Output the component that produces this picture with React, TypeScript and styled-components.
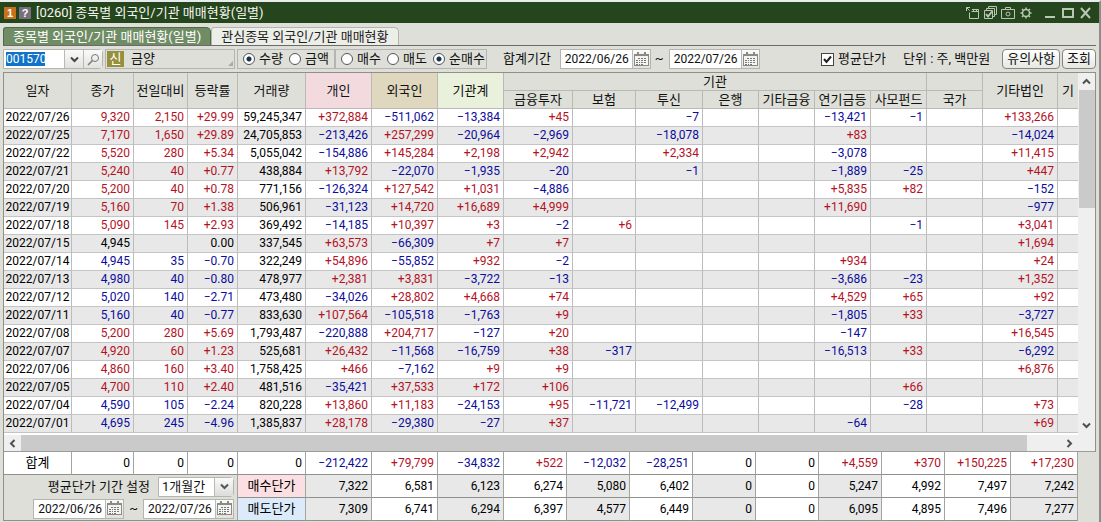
import React from "react";
import styled, { createGlobalStyle } from "styled-components";

const Global = createGlobalStyle`
  * { box-sizing: border-box; }
  body { margin: 0; background: #dedfd9; color: #111; font: 13px/16px Roboto, "Noto Sans CJK KR", sans-serif; }
  input, select, button { font: inherit; color: inherit; }
`;

const RED = "#b4121f";
const BLUE = "#0c0c9c";

const Window = styled.div`
  display: flex;
  flex-direction: column;
  min-height: 100vh;
  border-top: 2px solid #e9ecef;
  border-right: 2px solid #8c8c88;
`;
const TitleBar = styled.header`
  display: flex;
  align-items: center;
  gap: 3px;
  height: 21px;
  padding: 0 6px 0 4px;
  background: #25451c;
  color: #f4f6f2;
  svg { flex: none; }
`;
const TitleTag = styled.span<{ $bg: string }>`
  display: grid;
  place-items: center;
  width: 12px;
  height: 12px;
  background: ${(p) => p.$bg};
  color: #fff;
  font: bold 11px/12px "Liberation Sans", sans-serif;
`;
const Title = styled.h1`
  flex: 1;
  margin: 0 0 0 2px;
  font-size: 13px;
  font-weight: 400;
  line-height: 16px;
  white-space: nowrap;
`;
const IconButton = styled.button<{ $gap?: number }>`
  display: flex;
  margin: 0 0 0 ${(p) => p.$gap ?? 0}px;
  padding: 0;
  border: 0;
  background: none;
  color: #b9c7b4;
`;
const Tabs = styled.nav`
  display: flex;
  align-items: flex-end;
  height: 23px;
  margin: 0 3px;
  border-bottom: 1px solid #6b6b67;
`;
const Tab = styled.button<{ $active?: boolean }>`
  height: 18px;
  padding: 0 9px;
  border: 1px solid ${(p) => (p.$active ? "#4d6a44" : "#b3b4ae")};
  border-bottom: 0;
  border-radius: 3px 5px 0 0;
  background: ${(p) => (p.$active ? "#6f8c65" : "#eceee8")};
  color: ${(p) => (p.$active ? "#fff" : "#222")};
  line-height: 16px;
  white-space: nowrap;
`;
const Toolbar = styled.div`
  display: flex;
  align-items: center;
  height: 26px;
  padding: 0 3px;
  white-space: nowrap;
`;
const Box = styled.div<{ $w?: number; $ml?: number }>`
  display: flex;
  align-items: center;
  width: ${(p) => (p.$w ? p.$w + "px" : "auto")};
  height: 20px;
  margin-left: ${(p) => p.$ml ?? 0}px;
  border: 1px solid #b4b5af;
`;
const CodeBox = styled(Box)`
  background: #fff;
  border-radius: 0 4px 4px 0;
`;
const CodeInput = styled.input`
  width: 60px;
  height: 18px;
  padding: 0 2px;
  border: 0;
  background: linear-gradient(#1173c8, #1173c8) 2px 2px / 39px 14px no-repeat #fff;
  color: #fff;
  font-size: 12px;
`;
const SquareButton = styled.button<{ $w: number }>`
  display: grid;
  place-items: center;
  width: ${(p) => p.$w}px;
  height: 18px;
  padding: 0;
  border: 0;
  border-left: 1px solid #b9bab5;
  background: linear-gradient(#fafafa, #e2e3df);
  color: #444;
`;
const Badge = styled.span`
  width: 17px;
  height: 16px;
  margin: 0 7px 0 1px;
  background: #96903c;
  color: #fff;
  text-align: center;
  line-height: 16px;
`;
const Grip = styled.svg`
  margin: 8px 1px 0 auto;
`;
const Choice = styled.label<{ $w: number }>`
  display: flex;
  align-items: center;
  gap: 4px;
  width: ${(p) => p.$w}px;
  line-height: 16px;
`;
const Radio = styled.input`
  appearance: none;
  flex: none;
  width: 12px;
  height: 12px;
  margin: 0 0 0 5px;
  border: 1px solid #555;
  border-radius: 50%;
  background: #fff;
  &:checked { background: radial-gradient(circle, #16324f 2px, #fff 3px); }
`;
const Check = styled.span`
  display: grid;
  width: 13px;
  height: 13px;
  svg, input { grid-area: 1 / 1; }
  svg { pointer-events: none; }
`;
const CheckInput = styled.input`
  appearance: none;
  width: 13px;
  height: 13px;
  margin: 0;
  border: 1px solid #444;
  background: #fff;
`;
const Caption = styled.span<{ $ml?: number; $mr?: number }>`
  margin: 0 ${(p) => p.$mr ?? 0}px 0 ${(p) => p.$ml ?? 0}px;
`;
const Right = styled.div`
  display: flex;
  align-items: center;
  margin-left: auto;
`;
const DateBox = styled(Box)`
  width: 91px;
  background: #fff;
`;
const DateInput = styled.input`
  width: 71px;
  height: 18px;
  padding: 0 0 0 4px;
  border: 0;
  background: none;
  font-size: 12px;
`;
const RoundButton = styled.button`
  height: 20px;
  margin-left: 2px;
  padding: 0 4px;
  border: 1px solid #85867f;
  border-radius: 4px;
  background: linear-gradient(#fff, #e6e7e3);
  line-height: 16px;
`;
const GridArea = styled.div`
  display: flex;
  margin: 0 3px;
  border: 1px solid #8f908a;
  border-bottom-color: #9b9b97;
  background: #fff;
`;
const GridMain = styled.div`
  flex: 1;
  min-width: 0;
`;
const Table = styled.table`
  width: 100%;
  table-layout: fixed;
  border-collapse: separate;
  border-spacing: 0;
`;
const Th = styled.th<{ $bg?: string }>`
  height: 18px;
  padding: 0;
  overflow: hidden;
  border-right: 1px solid #b9bab5;
  border-bottom: 1px solid #b9bab5;
  background: ${(p) => p.$bg ?? "#dedfd8"};
  font-weight: 400;
  line-height: 16px;
  white-space: nowrap;
  &:last-child[rowspan] { border-right: 0; }
`;
const Row = styled.tr`
  &:nth-child(even) { background: #e8e8e8; }
`;
const Td = styled.td<{ $c?: string; $center?: boolean }>`
  height: 18px;
  padding: 0 ${(p) => (p.$center ? 0 : 3)}px 0 0;
  border-right: 1px solid #bcbcbc;
  border-bottom: 1px solid #c4c4c4;
  color: ${(p) => p.$c ?? "#000"};
  font-size: 12px;
  text-align: ${(p) => (p.$center ? "center" : "right")};
  line-height: 17px;
  white-space: nowrap;
  &:last-child { border-right: 0; }
`;
const HScroll = styled.div`
  display: flex;
  align-items: center;
  height: 16px;
  margin-top: 2px;
  background: #efefef;
`;
const HThumb = styled.div`
  flex: 1;
  height: 16px;
  margin-right: 34px;
  background: #cacaca;
`;
const VScroll = styled.div`
  display: flex;
  flex-direction: column;
  align-items: center;
  width: 17px;
  padding-bottom: 17px;
  background: #efefef;
`;
const VThumb = styled.div`
  width: 16px;
  height: 118px;
  margin-bottom: auto;
  background: #cacaca;
`;
const ScrollButton = styled.button`
  display: grid;
  place-items: center;
  flex: none;
  width: 17px;
  height: 17px;
  padding: 0;
  border: 0;
  background: none;
  color: #505050;
`;
const Summary = styled.div`
  margin: 0 21px 0 3px;
  border-left: 1px solid #8f908a;
`;
const SumTd = styled.td<{ $c?: string; $bg?: string; $label?: boolean }>`
  height: 23px;
  padding: 0 ${(p) => (p.$label ? 0 : 3)}px 0 0;
  border-right: 1px solid #a3a3a0;
  border-bottom: 1px solid #90908c;
  background: ${(p) => p.$bg ?? "#fff"};
  color: ${(p) => p.$c ?? "#000"};
  font-size: ${(p) => (p.$label ? 13 : 12)}px;
  text-align: ${(p) => (p.$label ? "center" : "right")};
  line-height: 16px;
`;
const SettingTd = styled.td`
  padding: 0;
  border-right: 1px solid #a3a3a0;
  border-bottom: 1px solid #90908c;
`;
const SettingLine = styled.div`
  display: flex;
  align-items: center;
  justify-content: flex-end;
  height: 22px;
  padding-right: 3px;
`;
const SelectWrap = styled(Box)`
  width: 76px;
  margin-left: 8px;
  background: #fff;
  border-radius: 0 4px 4px 0;
`;
const Select = styled.select`
  appearance: none;
  width: 74px;
  height: 18px;
  padding: 0 20px 0 3px;
  border: 0;
  background: none;
`;
const SelectArrow = styled.span`
  display: grid;
  place-items: center;
  flex: none;
  width: 19px;
  height: 18px;
  margin-left: -19px;
  border-left: 1px solid #b9bab5;
  background: linear-gradient(#fafafa, #dcddd9);
  color: #555;
  pointer-events: none;
`;

const Chevron = ({ d, w = 2 }: { d: string; w?: number }) => (
  <svg width="11" height="11" viewBox="0 0 11 11" fill="none" stroke="currentColor" strokeWidth={w}>
    <path d={d} />
  </svg>
);
const UP = "M2 7.5 5.5 4 9 7.5";
const DOWN = "M2 3.5 5.5 7 9 3.5";
const LEFT = "M7.5 2 4 5.5 7.5 9";
const RIGHT = "M3.5 2 7 5.5 3.5 9";

const CalendarIcon = () => (
  <svg width="15" height="15" viewBox="0 0 15 15" shapeRendering="crispEdges">
    <path fill="#8a8b86" d="M0 2h15v2H0zM0 4h1v10H0zM14 4h1v10h-1zM0 13h15v1H0zM3 0h2v4H3zM10 0h2v4h-2z" />
    <path fill="#f4f4f2" d="M1 5h13v8H1z" />
    <path fill="#777873" d="M4 6h2v1H4zM7 6h2v1H7zM10 6h2v1h-2zM2 8h2v1H2zM5 8h1v1H5zM7 8h2v1H7zM10 8h2v1h-2zM2 10h2v1H2zM5 10h1v1H5zM7 10h2v1H7zM10 10h2v1h-2zM2 12h2v1H2zM5 12h1v1H5zM7 12h2v1H7z" />
  </svg>
);

const DateField = ({ value, label }: { value: string; label: string }) => (
  <DateBox>
    <DateInput defaultValue={value} aria-label={label} />
    <SquareButton $w={18} aria-label={label + " 달력"}>
      <CalendarIcon />
    </SquareButton>
  </DateBox>
);

const widths = [68, 62, 54, 50, 68, 66, 66, 66, 69, 63, 67, 56, 56, 56, 56, 56, 75, 20];

// direction (r up, b down, k flat), date, close, change, rate, volume, then net amount per investor
const rows = [
  "r|2022/07/26|9,320|2,150|+29.99|59,245,347|+372,884|-511,062|-13,384|+45||-7|||-13,421|-1||+133,266",
  "r|2022/07/25|7,170|1,650|+29.89|24,705,853|-213,426|+257,299|-20,964|-2,969||-18,078|||+83|||-14,024",
  "r|2022/07/22|5,520|280|+5.34|5,055,042|-154,886|+145,284|+2,198|+2,942||+2,334|||-3,078|||+11,415",
  "r|2022/07/21|5,240|40|+0.77|438,884|+13,792|-22,070|-1,935|-20||-1|||-1,889|-25||+447",
  "r|2022/07/20|5,200|40|+0.78|771,156|-126,324|+127,542|+1,031|-4,886|||||+5,835|+82||-152",
  "r|2022/07/19|5,160|70|+1.38|506,961|-31,123|+14,720|+16,689|+4,999|||||+11,690|||-977",
  "r|2022/07/18|5,090|145|+2.93|369,492|-14,185|+10,397|+3|-2|+6|||||-1||+3,041",
  "k|2022/07/15|4,945||0.00|337,545|+63,573|-66,309|+7|+7||||||||+1,694",
  "b|2022/07/14|4,945|35|-0.70|322,249|+54,896|-55,852|+932|-2|||||+934|||+24",
  "b|2022/07/13|4,980|40|-0.80|478,977|+2,381|+3,831|-3,722|-13|||||-3,686|-23||+1,352",
  "b|2022/07/12|5,020|140|-2.71|473,480|-34,026|+28,802|+4,668|+74|||||+4,529|+65||+92",
  "b|2022/07/11|5,160|40|-0.77|833,630|+107,564|-105,518|-1,763|+9|||||-1,805|+33||-3,727",
  "r|2022/07/08|5,200|280|+5.69|1,793,487|-220,888|+204,717|-127|+20|||||-147|||+16,545",
  "r|2022/07/07|4,920|60|+1.23|525,681|+26,432|-11,568|-16,759|+38|-317||||-16,513|+33||-6,292",
  "r|2022/07/06|4,860|160|+3.40|1,758,425|+466|-7,162|+9|+9||||||||+6,876",
  "r|2022/07/05|4,700|110|+2.40|481,516|-35,421|+37,533|+172|+106||||||+66||",
  "b|2022/07/04|4,590|105|-2.24|820,228|+13,860|+11,183|-24,153|+95|-11,721|-12,499||||-28||+73",
  "b|2022/07/01|4,695|245|-4.96|1,385,837|+28,178|-29,380|-27|+37|||||-64|||+69",
].map((r) => r.split("|"));

const signColor = (v: string) => (v[0] === "+" ? RED : v[0] === "-" ? BLUE : undefined);
const show = (v: string) => v.replace("-", "−");

const sumWidths = [68, 62, 54, 50, 68, 66, 66, 66, 63, 63, 63, 63, 63, 63, 63, 66, 67];
const totals = ["0", "0", "0", "0", "-212,422", "+79,799", "-34,832", "+522", "-12,032", "-28,251", "0", "0", "+4,559", "+370", "+150,225", "+17,230"];
const buy = ["7,322", "6,581", "6,123", "6,274", "5,080", "6,402", "0", "0", "5,247", "4,992", "7,497", "7,242"];
const sell = ["7,309", "6,741", "6,294", "6,397", "4,577", "6,449", "0", "0", "6,095", "4,895", "7,496", "7,277"];
const shade = ["#e8e8e8", "#fff", "#e8e8e8", "#fff", "#e8e8e8", "#fff", "#e8e8e8", "#fff", "#e8e8e8", "#fff", "#fff", "#e8e8e8"];

const Cols = ({ list }: { list: number[] }) => (
  <colgroup>
    {list.map((w, i) => (
      <col key={i} style={{ width: w }} />
    ))}
  </colgroup>
);

export default function App() {
  return (
    <Window>
      <Global />
      <TitleBar>
        <TitleTag $bg="#c8701a">1</TitleTag>
        <TitleTag $bg="#77707c">?</TitleTag>
        <Title>[0260] 종목별 외국인/기관 매매현황(일별)</Title>
        <IconButton aria-label="창 분리">
          <svg width="14" height="14" viewBox="0 0 14 14" fill="none" stroke="currentColor">
            <path d="M1.500 5V1.500H5M1.500 1.500l3 3M7 3.500h6.500v9h-9V6.500M6.500 5.500h7M8.500 3.500v2M11.500 3.500v2" />
          </svg>
        </IconButton>
        <IconButton $gap={1} aria-label="목록 선택">
          <svg width="14" height="14" viewBox="0 0 14 14" fill="none" stroke="currentColor">
            <path d="M1.500 4.500h8v8h-8zM3.500 4V2.500h8v8H10M5.500 2V.5h8v8H12" />
            <path d="M3 8l2 2.500L9 5.500" strokeWidth="2" />
          </svg>
        </IconButton>
        <IconButton $gap={1} aria-label="화면 캡처">
          <svg width="14" height="14" viewBox="0 0 14 14" fill="none" stroke="currentColor">
            <path d="M.5 3.500h13v9H.5zM4.500 3V1.500h5V3" />
            <circle cx="7" cy="8" r="2" />
          </svg>
        </IconButton>
        <IconButton $gap={1} aria-label="설정">
          <svg width="14" height="14" viewBox="0 0 14 14" fill="none" stroke="currentColor" strokeWidth="1.500">
            <circle cx="7" cy="7" r="3.500" />
            <path d="M7 1.500v2M7 10.500v2M1.500 7h2M10.500 7h2M3 3l1.500 1.500M9.500 9.500 11 11M11 3 9.500 4.500M4.500 9.500 3 11" />
          </svg>
        </IconButton>
        <IconButton $gap={8} aria-label="최소화">
          <svg width="13" height="12" viewBox="0 0 13 12" fill="none" stroke="currentColor" strokeWidth="2">
            <path d="M1 10h10" />
          </svg>
        </IconButton>
        <IconButton $gap={1} aria-label="최대화">
          <svg width="14" height="12" viewBox="0 0 14 12" fill="none" stroke="currentColor" strokeWidth="2">
            <path d="M2 2h10v8H2z" />
          </svg>
        </IconButton>
        <IconButton $gap={1} aria-label="닫기">
          <svg width="14" height="12" viewBox="0 0 14 12" fill="none" stroke="currentColor" strokeWidth="2">
            <path d="M2 1l9 10M11 1 2 11" />
          </svg>
        </IconButton>
      </TitleBar>
      <Tabs>
        <Tab $active>종목별 외국인/기관 매매현황(일별)</Tab>
        <Tab>관심종목 외국인/기관 매매현황</Tab>
      </Tabs>
      <Toolbar>
        <CodeBox $w={100}>
          <CodeInput defaultValue="001570" aria-label="종목코드" />
          <SquareButton $w={19} aria-label="종목 목록">
            <Chevron d={DOWN} />
          </SquareButton>
          <SquareButton $w={19} aria-label="종목 검색">
            <svg width="13" height="13" viewBox="0 0 13 13" fill="none" stroke="#777">
              <circle cx="8" cy="5" r="3.500" />
              <path d="M5.500 7.500 1 12" strokeWidth="1.500" />
            </svg>
          </SquareButton>
        </CodeBox>
        <Box $w={130} $ml={2}>
          <Badge>신</Badge>
          금양
          <Grip width="5" height="5">
            <path d="M5 0v5H0z" fill="#aaa" />
          </Grip>
        </Box>
        <Box $ml={2} $w={98}>
          <Choice $w={46}>
            <Radio type="radio" name="unit" defaultChecked />
            수량
          </Choice>
          <Choice $w={46}>
            <Radio type="radio" name="unit" />
            금액
          </Choice>
        </Box>
        <Box $w={152}>
          <Choice $w={46}>
            <Radio type="radio" name="side" />
            매수
          </Choice>
          <Choice $w={46}>
            <Radio type="radio" name="side" />
            매도
          </Choice>
          <Choice $w={58}>
            <Radio type="radio" name="side" defaultChecked />
            순매수
          </Choice>
        </Box>
        <Caption $ml={16} $mr={9}>합계기간</Caption>
        <DateField value="2022/06/26" label="시작일" />
        <Caption $ml={4} $mr={5}>~</Caption>
        <DateField value="2022/07/26" label="종료일" />
        <Right>
          <Choice $w={66}>
            <Check>
              <CheckInput type="checkbox" defaultChecked />
              <svg width="13" height="13" viewBox="0 0 13 13" fill="none" stroke="#222" strokeWidth="2">
                <path d="M3 6l2.500 3L10 3.500" />
              </svg>
            </Check>
            평균단가
          </Choice>
          <Caption $ml={16} $mr={10}>단위 : 주, 백만원</Caption>
          <RoundButton>유의사항</RoundButton>
          <RoundButton>조회</RoundButton>
        </Right>
      </Toolbar>
      <GridArea>
        <GridMain>
          <Table>
            <Cols list={widths} />
            <thead>
              <tr>
                <Th rowSpan={2}>일자</Th>
                <Th rowSpan={2}>종가</Th>
                <Th rowSpan={2}>전일대비</Th>
                <Th rowSpan={2}>등락률</Th>
                <Th rowSpan={2}>거래량</Th>
                <Th rowSpan={2} $bg="#f3dade">개인</Th>
                <Th rowSpan={2} $bg="#dfd8bf">외국인</Th>
                <Th rowSpan={2} $bg="#e9f0dc">기관계</Th>
                <Th colSpan={7}>기관</Th>
                <Th />
                <Th rowSpan={2}>기타법인</Th>
                <Th rowSpan={2}>기</Th>
              </tr>
              <tr>
                {["금융투자", "보험", "투신", "은행", "기타금융", "연기금등", "사모펀드", "국가"].map((h) => (
                  <Th key={h}>{h}</Th>
                ))}
              </tr>
            </thead>
            <tbody>
              {rows.map(([dir, date, close, change, rate, volume, ...rest]) => {
                const c = dir === "r" ? RED : dir === "b" ? BLUE : undefined;
                return (
                  <Row key={date}>
                    <Td $center>{date}</Td>
                    <Td $c={c}>{close}</Td>
                    <Td $c={c}>{change}</Td>
                    <Td $c={c}>{show(rate)}</Td>
                    <Td>{volume}</Td>
                    {rest.map((v, i) => (
                      <Td key={i} $c={signColor(v)}>{show(v)}</Td>
                    ))}
                    <Td />
                  </Row>
                );
              })}
            </tbody>
          </Table>
          <HScroll>
            <ScrollButton aria-label="왼쪽"><Chevron d={LEFT} /></ScrollButton>
            <HThumb />
            <ScrollButton aria-label="오른쪽"><Chevron d={RIGHT} /></ScrollButton>
          </HScroll>
        </GridMain>
        <VScroll>
          <ScrollButton aria-label="위로"><Chevron d={UP} /></ScrollButton>
          <VThumb />
          <ScrollButton aria-label="아래로"><Chevron d={DOWN} /></ScrollButton>
        </VScroll>
      </GridArea>
      <Summary>
        <Table>
          <Cols list={sumWidths} />
          <tbody>
            <tr>
              <SumTd $label>합계</SumTd>
              {totals.map((v, i) => (
                <SumTd key={i} $c={signColor(v)}>{show(v)}</SumTd>
              ))}
            </tr>
            <tr>
              <SettingTd colSpan={4} rowSpan={2}>
                <SettingLine>
                  <label htmlFor="period">평균단가 기간 설정</label>
                  <SelectWrap>
                    <Select id="period">
                      <option>1개월간</option>
                    </Select>
                    <SelectArrow><Chevron d={DOWN} /></SelectArrow>
                  </SelectWrap>
                </SettingLine>
                <SettingLine>
                  <DateField value="2022/06/26" label="평균단가 시작일" />
                  <Caption $ml={5} $mr={5}>~</Caption>
                  <DateField value="2022/07/26" label="평균단가 종료일" />
                </SettingLine>
              </SettingTd>
              <SumTd $label $bg="#fbdfe2">매수단가</SumTd>
              {buy.map((v, i) => (
                <SumTd key={i} $bg={shade[i]}>{v}</SumTd>
              ))}
            </tr>
            <tr>
              <SumTd $label $bg="#dcebfa">매도단가</SumTd>
              {sell.map((v, i) => (
                <SumTd key={i} $bg={shade[i]}>{v}</SumTd>
              ))}
            </tr>
          </tbody>
        </Table>
      </Summary>
    </Window>
  );
}
